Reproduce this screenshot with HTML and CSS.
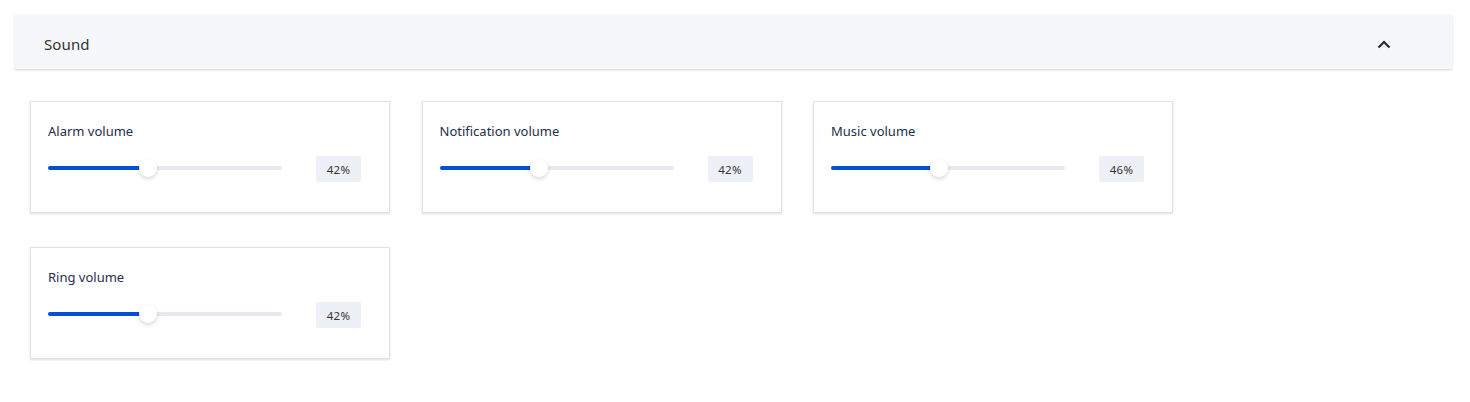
FILE: index.html
```html
<!DOCTYPE html>
<html lang="en">
<head>
<meta charset="utf-8">
<title>Sound</title>
<link rel="stylesheet" href="styles.css">
</head>
<body>
<div class="page">
  <div class="accordion-header">
    <span class="accordion-title">Sound</span>
    <svg class="chevron" width="14" height="9" viewBox="0 0 14 9" aria-hidden="true">
      <path d="M1.5 7.5 L7 2 L12.5 7.5" fill="none" stroke="#2b2b2b" stroke-width="2.2"/>
    </svg>
  </div>
  <div class="cards">
    <div class="card">
      <div class="card-label">Alarm volume</div>
      <div class="slider-row">
        <div class="slider">
          <div class="track"></div>
          <div class="fill" style="width: 99.7px"></div>
          <div class="thumb" style="left: 90.7px"></div>
        </div>
        <div class="badge">42%</div>
      </div>
    </div>
    <div class="card">
      <div class="card-label">Notification volume</div>
      <div class="slider-row">
        <div class="slider">
          <div class="track"></div>
          <div class="fill" style="width: 99.7px"></div>
          <div class="thumb" style="left: 90.7px"></div>
        </div>
        <div class="badge">42%</div>
      </div>
    </div>
    <div class="card">
      <div class="card-label">Music volume</div>
      <div class="slider-row">
        <div class="slider">
          <div class="track"></div>
          <div class="fill" style="width: 108.4px"></div>
          <div class="thumb" style="left: 99.4px"></div>
        </div>
        <div class="badge">46%</div>
      </div>
    </div>
    <div class="card">
      <div class="card-label">Ring volume</div>
      <div class="slider-row">
        <div class="slider">
          <div class="track"></div>
          <div class="fill" style="width: 99.7px"></div>
          <div class="thumb" style="left: 90.7px"></div>
        </div>
        <div class="badge">42%</div>
      </div>
    </div>
  </div>
</div>
</body>
</html>
```

FILE: styles.css
```css
* { box-sizing: border-box; }

html, body {
  margin: 0;
  padding: 0;
  background: #ffffff;
}

body {
  font-family: "Noto Sans", "Open Sans", "Liberation Sans", sans-serif;
  color: #1f2d4d;
}

.page {
  padding: 15px 18px 15px 15px;
}

.accordion-header {
  height: 54px;
  background: #f6f7fb;
  box-shadow: 0 1px 2px rgba(0, 0, 0, 0.16);
  display: flex;
  align-items: center;
  justify-content: space-between;
  padding: 4px 61px 0 29px;
}

.accordion-title {
  font-size: 15px;
  color: #333333;
  letter-spacing: 0.1px;
}

.chevron {
  display: block;
  margin-top: 1px;
}

.cards {
  display: flex;
  flex-wrap: wrap;
  column-gap: 31.5px;
  row-gap: 34px;
  padding: 32px 0 0 15px;
}

.card {
  width: 360px;
  height: 112px;
  border: 1px solid #e1e2e6;
  background: #ffffff;
  box-shadow: 0 1px 2px rgba(0, 0, 0, 0.12);
  padding: 20px 17px 0 17px;
}

.card-label {
  font-size: 13px;
  line-height: 18px;
  color: #1f2d4d;
}

.slider-row {
  display: flex;
  align-items: center;
  margin-top: 16px;
}

.slider {
  position: relative;
  width: 234px;
  height: 20px;
  margin-right: 34px;
  margin-top: -3px;
}

.track {
  position: absolute;
  left: 0;
  right: 0;
  top: 8px;
  height: 4px;
  border-radius: 2px;
  background: #e8e9ee;
}

.fill {
  position: absolute;
  left: 0;
  top: 8px;
  height: 4px;
  border-radius: 2px;
  background: #0550d0;
}

.thumb {
  position: absolute;
  top: 1px;
  width: 18px;
  height: 18px;
  border-radius: 50%;
  background: #ffffff;
  box-shadow: 0 2px 4px rgba(0, 0, 0, 0.16);
}

.badge {
  width: 45px;
  height: 26px;
  background: #edf0f6;
  border-radius: 2px;
  font-size: 11.5px;
  color: #333333;
  display: flex;
  align-items: center;
  justify-content: center;
  letter-spacing: 0.3px;
}
```
